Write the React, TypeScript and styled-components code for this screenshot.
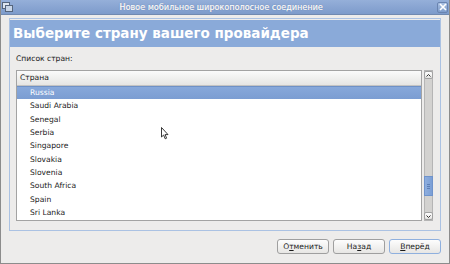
import React from "react";
import styled, { createGlobalStyle } from "styled-components";

const GlobalStyle = createGlobalStyle`
  html, body {
    margin: 0;
    padding: 0;
    background: #edeceb;
  }
  body {
    font-family: "DejaVu Sans", "Liberation Sans", sans-serif;
  }
`;

const countries = [
  "Russia",
  "Saudi Arabia",
  "Senegal",
  "Serbia",
  "Singapore",
  "Slovakia",
  "Slovenia",
  "South Africa",
  "Spain",
  "Sri Lanka",
];

const App = () => {
  return (
    <>
      <GlobalStyle />
      <Window>
        <TitleBar>
          <AppIcon viewBox="0 0 11 10">
            <rect x="0.5" y="0.5" width="7" height="6" fill="#dfe6f0" stroke="#55657d" />
            <rect x="3.5" y="3.5" width="7" height="6" fill="#c9d6e8" stroke="#55657d" />
          </AppIcon>
          <TitleText>Новое мобильное широкополосное соединение</TitleText>
          <CloseButton>
            <svg width="8" height="8" viewBox="0 0 8 8">
              <path d="M1 1 L7 7 M7 1 L1 7" stroke="#ffffff" strokeWidth="1.6" />
            </svg>
          </CloseButton>
        </TitleBar>
        <Body>
          <Frame>
            <Banner>Выберите страну вашего провайдера</Banner>
            <FrameContent>
              <Label>Список стран:</Label>
              <ListRow>
                <TreeView>
                  <ColumnHeader>Страна</ColumnHeader>
                  {countries.map((name, i) => (
                    <Row key={name} selected={i === 0}>
                      {name}
                    </Row>
                  ))}
                </TreeView>
                <Scrollbar>
                  <ScrollArrow>
                    <svg width="5" height="3" viewBox="0 0 5 3">
                      <path d="M0.5 2.5 L2.5 0.5 L4.5 2.5" stroke="#333" fill="none" />
                    </svg>
                  </ScrollArrow>
                  <Trough>
                    <Thumb>
                      <Grip />
                    </Thumb>
                  </Trough>
                  <ScrollArrow>
                    <svg width="5" height="3" viewBox="0 0 5 3">
                      <path d="M0.5 0.5 L2.5 2.5 L4.5 0.5" stroke="#333" fill="none" />
                    </svg>
                  </ScrollArrow>
                </Scrollbar>
              </ListRow>
            </FrameContent>
          </Frame>
          <ButtonBar>
            <Button>
              О<u>т</u>менить
            </Button>
            <Button>
              На<u>з</u>ад
            </Button>
            <Button focused>
              <u>В</u>перёд
            </Button>
          </ButtonBar>
        </Body>
        <Cursor viewBox="0 0 8 13">
          <path
            d="M0.5 0.5 L0.5 10 L2.6 8 L4.2 11.8 L5.6 11.2 L4.1 7.6 L7 7.6 Z"
            fill="#ffffff"
            stroke="#222"
            strokeWidth="0.9"
          />
        </Cursor>
      </Window>
    </>
  );
};

export default App;

const Window = styled.div`
  position: relative;
  width: 450px;
  height: 264px;
  box-sizing: border-box;
  border: 1px solid #8c8c8c;
  border-top: none;
  background: #edeceb;
  display: flex;
  flex-direction: column;
  overflow: hidden;
`;

const TitleBar = styled.div`
  height: 14px;
  margin: 0 -1px;
  background: linear-gradient(#95afd9, #7d9bcb);
  border-bottom: 1px solid #7089b0;
  display: flex;
  align-items: center;
  position: relative;
`;

const AppIcon = styled.svg`
  width: 11px;
  height: 10px;
  margin-left: 2px;
`;

const TitleText = styled.div`
  flex: 1;
  text-align: center;
  color: #ffffff;
  font-size: 8px;
  letter-spacing: 0.05px;
  text-shadow: 0 0 1px #4f6a98, 0.4px 0 0 #ffffff;
  margin-right: 8px;
`;

const CloseButton = styled.div`
  width: 11px;
  height: 11px;
  margin-right: 2px;
  box-sizing: border-box;
  border: 1px solid #6a84b0;
  border-radius: 2px;
  background: linear-gradient(#a9c0e2, #7f9dcc);
  display: flex;
  align-items: center;
  justify-content: center;
`;

const Body = styled.div`
  flex: 1;
  display: flex;
  flex-direction: column;
  padding: 3px 8px 0 8px;
`;

const Frame = styled.div`
  height: 213px;
  box-sizing: border-box;
  border: 1px solid #abc2e3;
  display: flex;
  flex-direction: column;
`;

const Banner = styled.div`
  height: 27px;
  background: #8aaad9;
  color: #ffffff;
  font-size: 13.5px;
  font-weight: bold;
  padding-left: 3px;
  line-height: 27px;
  margin-top: 1px;
`;

const FrameContent = styled.div`
  flex: 1;
  display: flex;
  flex-direction: column;
  padding: 4px 7px 9px 6px;
`;

const Label = styled.div`
  font-size: 7.6px;
  color: #1a1a1a;
  height: 15px;
  line-height: 15px;
  margin-bottom: 4px;
`;

const ListRow = styled.div`
  flex: 1;
  display: flex;
  gap: 2px;
`;

const TreeView = styled.div`
  flex: 1;
  box-sizing: border-box;
  border: 1px solid #a3a3a3;
  background: #ffffff;
  overflow: hidden;
`;

const ColumnHeader = styled.div`
  height: 14px;
  line-height: 14px;
  font-size: 7.6px;
  color: #1a1a1a;
  padding-left: 3px;
  background: linear-gradient(#fbfbfb, #e6e5e3);
  border-bottom: 1px solid #c3c3c3;
`;

const Row = styled.div<{ selected?: boolean }>`
  height: 13.33px;
  line-height: 13.33px;
  font-size: 7.6px;
  padding-left: 13px;
  color: ${({ selected }) => (selected ? "#ffffff" : "#222222")};
  background: ${({ selected }) =>
    selected ? "linear-gradient(#88a9db, #7b9dd2)" : "transparent"};
  box-shadow: ${({ selected }) => (selected ? "inset 0 1px 0 #6f91c6" : "none")};
`;

const Scrollbar = styled.div`
  width: 9px;
  display: flex;
  flex-direction: column;
  background: #d3d2d0;
  border: 1px solid #b5b5b5;
  box-sizing: border-box;
`;

const ScrollArrow = styled.div`
  height: 8px;
  box-sizing: border-box;
  background: linear-gradient(#ffffff, #e4e3e1);
  border: 1px solid #a2a2a2;
  border-radius: 2px;
  margin: 0 -1px;
  display: flex;
  align-items: center;
  justify-content: center;
`;

const Trough = styled.div`
  flex: 1;
  display: flex;
  flex-direction: column;
  justify-content: flex-end;
  padding-bottom: 16px;
`;

const Thumb = styled.div`
  height: 18px;
  background: linear-gradient(90deg, #8eaede, #7b9fd6);
  border: 1px solid #6f93cb;
  margin: 0 -1px;
  display: flex;
  align-items: center;
  justify-content: center;
`;

const Grip = styled.div`
  width: 3px;
  height: 5px;
  background: repeating-linear-gradient(#5d7fb5 0 1px, transparent 1px 2px);
`;

const ButtonBar = styled.div`
  display: flex;
  justify-content: flex-end;
  gap: 4px;
  margin-top: 8px;
  margin-right: 0px;
`;

const Button = styled.div<{ focused?: boolean }>`
  width: 52px;
  height: 15px;
  box-sizing: border-box;
  border: 1px solid ${({ focused }) => (focused ? "#8fb0de" : "#9f9f9f")};
  border-radius: 3px;
  background: linear-gradient(#fdfdfd, #e7e6e4);
  font-size: 7.6px;
  color: #1a1a1a;
  display: flex;
  align-items: center;
  justify-content: center;
  u {
    text-decoration-thickness: 1px;
    text-underline-offset: 1px;
  }
`;

const Cursor = styled.svg`
  position: absolute;
  left: 160px;
  top: 127px;
  width: 8px;
  height: 13px;
`;
